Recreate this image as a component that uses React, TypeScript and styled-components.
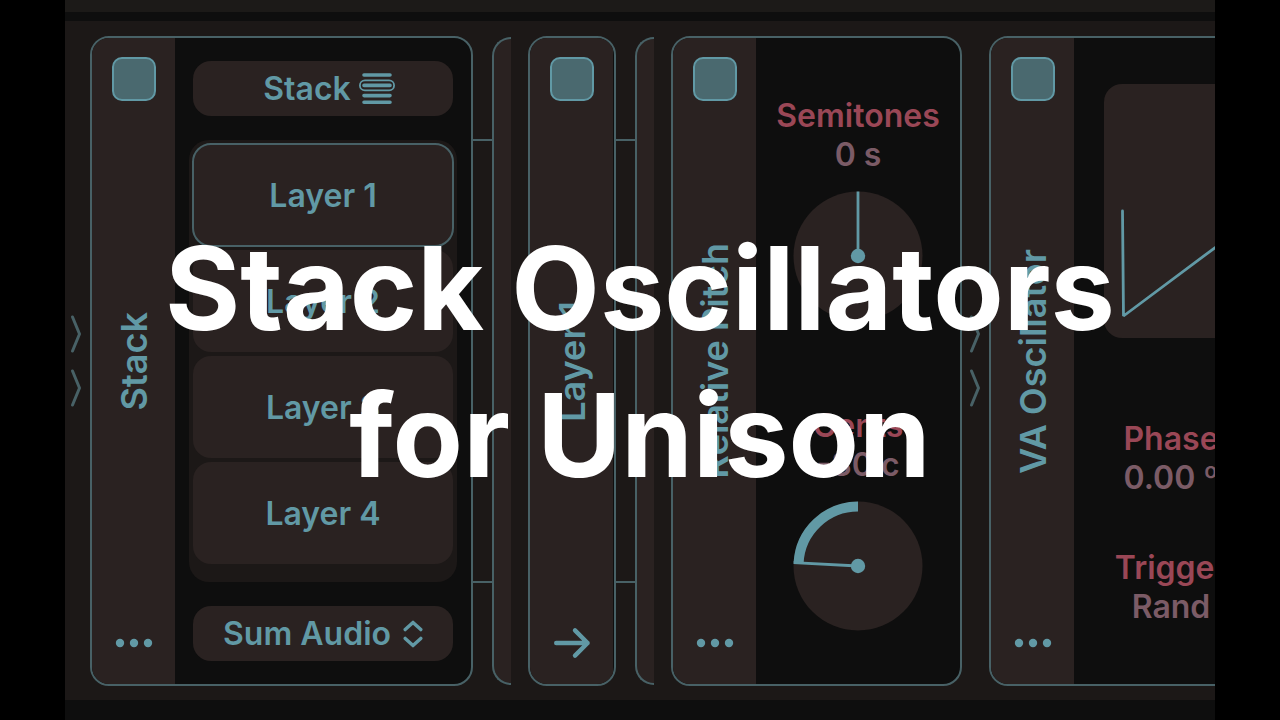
import React from "react";
import styled, { createGlobalStyle, ThemeProvider } from "styled-components";

const theme = {
  teal: "#6199a5",
  tealDim: "#486166",
  tealFill: "#4a696f",
  panel: "#2a2221",
  board: "#1c1817",
  well: "#0e0e0e",
  red: "#9a4756",
  mauve: "#7b5b66",
};

const GlobalStyle = createGlobalStyle`
  * { box-sizing: border-box; }
  body {
    margin: 0;
    background: #000;
    font-family: Inter, "Liberation Sans", sans-serif;
    font-weight: 600;
  }
  button, input { font: inherit; margin: 0; padding: 0; border: 0; background: none; color: inherit; }
`;

const Page = styled.div`
  position: relative;
  min-height: 100vh;
  padding: 0 65px;
  display: flex;
  overflow: hidden;
`;

const Stage = styled.main`
  flex: 1;
  min-width: 0;
  display: flex;
  flex-direction: column;
  overflow: hidden;
  background: ${(p) => p.theme.well};
`;

const TopStrip = styled.div`
  height: 12px;
  margin-bottom: 9px;
  background: #1c1a18;
`;

const Board = styled.div`
  flex: 1;
  display: flex;
  padding: 15px 0 14px;
  margin-bottom: 20px;
  overflow: hidden;
  background: ${(p) => p.theme.board};
`;

const Module = styled.section<{ $width: number; $grow?: boolean }>`
  flex: ${(p) => (p.$grow ? 1 : 0)} 0 ${(p) => p.$width}px;
  display: flex;
  overflow: hidden;
  border: 2px solid ${(p) => p.theme.tealDim};
  border-radius: 19px;
  background: ${(p) => p.theme.well};
`;

const Side = styled.header`
  flex: 0 0 83px;
  display: flex;
  flex-direction: column;
  align-items: center;
  justify-content: space-between;
  padding: 19px 0;
  background: ${(p) => p.theme.panel};
`;

const Toggle = styled.input`
  appearance: none;
  width: 44px;
  height: 44px;
  border: 2px solid ${(p) => p.theme.teal};
  border-radius: 10px;
  background: transparent;
  &:checked { background: ${(p) => p.theme.tealFill}; }
`;

const SideTitle = styled.h2`
  margin: 0;
  writing-mode: vertical-rl;
  transform: rotate(180deg);
  font-size: 36px;
  line-height: 46px;
  font-weight: 600;
  white-space: nowrap;
  color: ${(p) => p.theme.teal};
`;

const IconButton = styled.button`
  width: 44px;
  height: 44px;
  display: grid;
  place-items: center;
  color: ${(p) => p.theme.teal};
`;

const Inlet = styled.div<{ $width: number }>`
  flex: 0 0 ${(p) => p.$width}px;
  display: flex;
  flex-direction: column;
  align-items: flex-end;
  justify-content: center;
  gap: 16px;
  padding-right: 8px;
  color: ${(p) => p.theme.tealDim};
`;

const Link = styled.div`
  flex: 0 0 19px;
  margin: 103px 0;
  border: solid ${(p) => p.theme.tealDim};
  border-width: 2px 0;
`;

const Stub = styled.div`
  flex: 0 0 19px;
  margin: 1px 17px 1px 0;
  border: 2px solid ${(p) => p.theme.tealDim};
  border-right: 0;
  border-radius: 19px 0 0 19px;
  background: ${(p) => p.theme.panel};
`;

const StackBody = styled.div`
  flex: 1;
  display: flex;
  flex-direction: column;
  gap: 24px;
  padding: 23px 14px;
`;

const PillButton = styled.button<{ $gap: number; $inset?: number }>`
  height: 55px;
  margin: 0 4px;
  padding-left: ${(p) => p.$inset ?? 0}px;
  display: flex;
  align-items: center;
  justify-content: center;
  gap: ${(p) => p.$gap}px;
  border-radius: 18px;
  background: ${(p) => p.theme.panel};
  color: ${(p) => p.theme.teal};
  font-size: 32px;
  line-height: 39px;
  white-space: nowrap;
`;

const LayerList = styled.div`
  flex: 1;
  display: flex;
  flex-direction: column;
  gap: 4px;
  padding: 4px 4px 18px;
  border-radius: 20px;
  background: ${(p) => p.theme.board};
`;

const LayerButton = styled.button`
  flex: 1;
  border-radius: 18px;
  background: ${(p) => p.theme.panel};
  color: ${(p) => p.theme.teal};
  font-size: 32px;
  line-height: 39px;
  &[aria-pressed="true"] {
    outline: 2px solid ${(p) => p.theme.tealDim};
    outline-offset: -1px;
  }
`;

const KnobBody = styled.div`
  flex: 1;
  display: flex;
  flex-direction: column;
  align-items: center;
  justify-content: space-between;
  padding: 58px 0 53px;
`;

const Param = styled.div`
  display: flex;
  flex-direction: column;
  align-items: center;
  font-size: 32px;
  line-height: 39px;
  white-space: nowrap;
`;

const ParamName = styled.span`
  color: ${(p) => p.theme.red};
`;

const ParamValue = styled.span`
  color: ${(p) => p.theme.mauve};
`;

const Dial = styled.svg`
  width: 130px;
  height: 130px;
  margin-top: 17px;
`;

const OscBody = styled.div`
  flex: 1;
  display: flex;
  flex-direction: column;
  align-items: flex-start;
  padding: 46px 30px;
`;

const Scope = styled.svg`
  flex: none;
  width: 254px;
  height: 254px;
  margin-bottom: 81px;
  border-radius: 18px;
  background: ${(p) => p.theme.panel};
`;

const ParamColumn = styled.div`
  width: 134px;
  display: flex;
  flex-direction: column;
  gap: 51px;
`;

const Headline = styled.h1`
  position: absolute;
  inset: 0;
  display: grid;
  place-content: center;
  margin: 0;
  padding-top: 4px;
  text-align: center;
  font-size: 115px;
  line-height: 147px;
  font-weight: 700;
  white-space: nowrap;
  color: #fff;
  pointer-events: none;
`;

const Dots = () => (
  <svg width="38" height="10" viewBox="0 0 38 10" fill="currentColor" aria-hidden="true">
    <circle cx="5" cy="5" r="4.2" />
    <circle cx="19" cy="5" r="4.2" />
    <circle cx="33" cy="5" r="4.2" />
  </svg>
);

const Arrow = () => (
  <svg width="38" height="32" viewBox="0 0 38 32" fill="none" stroke="currentColor" strokeWidth="4.4" strokeLinecap="round" strokeLinejoin="round" aria-hidden="true">
    <path d="M3.2 16H34.6M22 3.4L34.6 16L22 28.6" />
  </svg>
);

const Chevron = () => (
  <svg width="12" height="38" viewBox="0 0 12 38" fill="none" stroke="currentColor" strokeWidth="3" strokeLinecap="round" strokeLinejoin="round" aria-hidden="true">
    <path d="M2.5 2L9.5 19L2.5 36" />
  </svg>
);

const StackGlyph = () => (
  <svg width="36" height="32" viewBox="0 0 36 32" fill="none" stroke="currentColor" strokeLinecap="round" aria-hidden="true">
    <path strokeWidth="3.6" d="M5 2H31M5 12.4H31M5 22.6H31M5 29.2H31" />
    <rect strokeWidth="1.8" x="0.9" y="7.4" width="34.2" height="10" rx="5" />
  </svg>
);

const UpDown = () => (
  <svg width="20" height="28" viewBox="0 0 20 28" fill="none" stroke="currentColor" strokeWidth="3.4" strokeLinecap="round" strokeLinejoin="round" aria-hidden="true">
    <path d="M2.2 9.6L10 2.4L17.8 9.6M2.2 18.4L10 25.6L17.8 18.4" />
  </svg>
);

type SideProps = { title: string; icon?: "dots" | "arrow" };

const ModuleSide = ({ title, icon = "dots" }: SideProps) => (
  <Side>
    <Toggle type="checkbox" defaultChecked aria-label={`${title} enabled`} />
    <SideTitle>{title}</SideTitle>
    <IconButton type="button" aria-label={icon === "dots" ? `${title} options` : `Open ${title}`}>
      {icon === "dots" ? <Dots /> : <Arrow />}
    </IconButton>
  </Side>
);

type KnobProps = { name: string; value: string; angle: number };

const Knob = ({ name, value, angle }: KnobProps) => {
  const rad = (angle * Math.PI) / 180;
  const at = (r: number) => `${65 + r * Math.sin(rad)} ${65 - r * Math.cos(rad)}`;
  return (
    <Param>
      <ParamName>{name}</ParamName>
      <ParamValue>{value}</ParamValue>
      <Dial viewBox="0 0 130 130" fill="none" stroke={theme.teal} role="img" aria-label={`${name} ${value}`}>
        <circle cx="65" cy="65" r="64.5" fill={theme.panel} stroke="none" />
        {angle !== 0 && (
          <path strokeWidth="10" d={`M${at(59.5)}A59.5 59.5 0 0 ${angle < 0 ? 1 : 0} 65 5.5`} />
        )}
        <path strokeWidth="2.8" d={`M65 65L${at(64.5)}`} />
        <circle cx="65" cy="65" r="7.2" fill={theme.teal} stroke="none" />
      </Dial>
    </Param>
  );
};

const layers = ["Layer 1", "Layer 2", "Layer 3", "Layer 4"];

export default function App() {
  const [active, setActive] = React.useState(layers[0]);
  return (
    <ThemeProvider theme={theme}>
      <GlobalStyle />
      <Page>
        <Stage>
          <TopStrip />
          <Board>
            <Inlet $width={25}>
              <Chevron />
              <Chevron />
            </Inlet>
            <Module $width={383}>
              <ModuleSide title="Stack" />
              <StackBody>
                <PillButton type="button" $gap={8} $inset={12}>
                  Stack
                  <StackGlyph />
                </PillButton>
                <LayerList>
                  {layers.map((name) => (
                    <LayerButton key={name} type="button" aria-pressed={name === active} onClick={() => setActive(name)}>
                      {name}
                    </LayerButton>
                  ))}
                </LayerList>
                <PillButton type="button" $gap={12}>
                  Sum Audio
                  <UpDown />
                </PillButton>
              </StackBody>
            </Module>
            <Link />
            <Stub />
            <Module $width={88}>
              <ModuleSide title="Layer 1" icon="arrow" />
            </Module>
            <Link />
            <Stub />
            <Module $width={291}>
              <ModuleSide title="Relative Pitch" />
              <KnobBody>
                <Knob name="Semitones" value="0 s" angle={0} />
                <Knob name="Cents" value="-80 c" angle={-87} />
              </KnobBody>
            </Module>
            <Inlet $width={27}>
              <Chevron />
              <Chevron />
            </Inlet>
            <Module $width={400} $grow>
              <ModuleSide title="VA Oscillator" />
              <OscBody>
                <Scope viewBox="0 0 254 254" fill="none" stroke={theme.teal} strokeWidth="2.8" strokeLinejoin="bevel" strokeLinecap="round" role="img" aria-label="Waveform">
                  <path d="M18.5 127L19.5 232L235 71V127" />
                </Scope>
                <ParamColumn>
                  <Param>
                    <ParamName>Phase</ParamName>
                    <ParamValue>0.00 º</ParamValue>
                  </Param>
                  <Param>
                    <ParamName>Trigger</ParamName>
                    <ParamValue>Rand</ParamValue>
                  </Param>
                </ParamColumn>
              </OscBody>
            </Module>
          </Board>
        </Stage>
        <Headline>
          <span>Stack Oscillators</span>
          <span>for Unison</span>
        </Headline>
      </Page>
    </ThemeProvider>
  );
}
